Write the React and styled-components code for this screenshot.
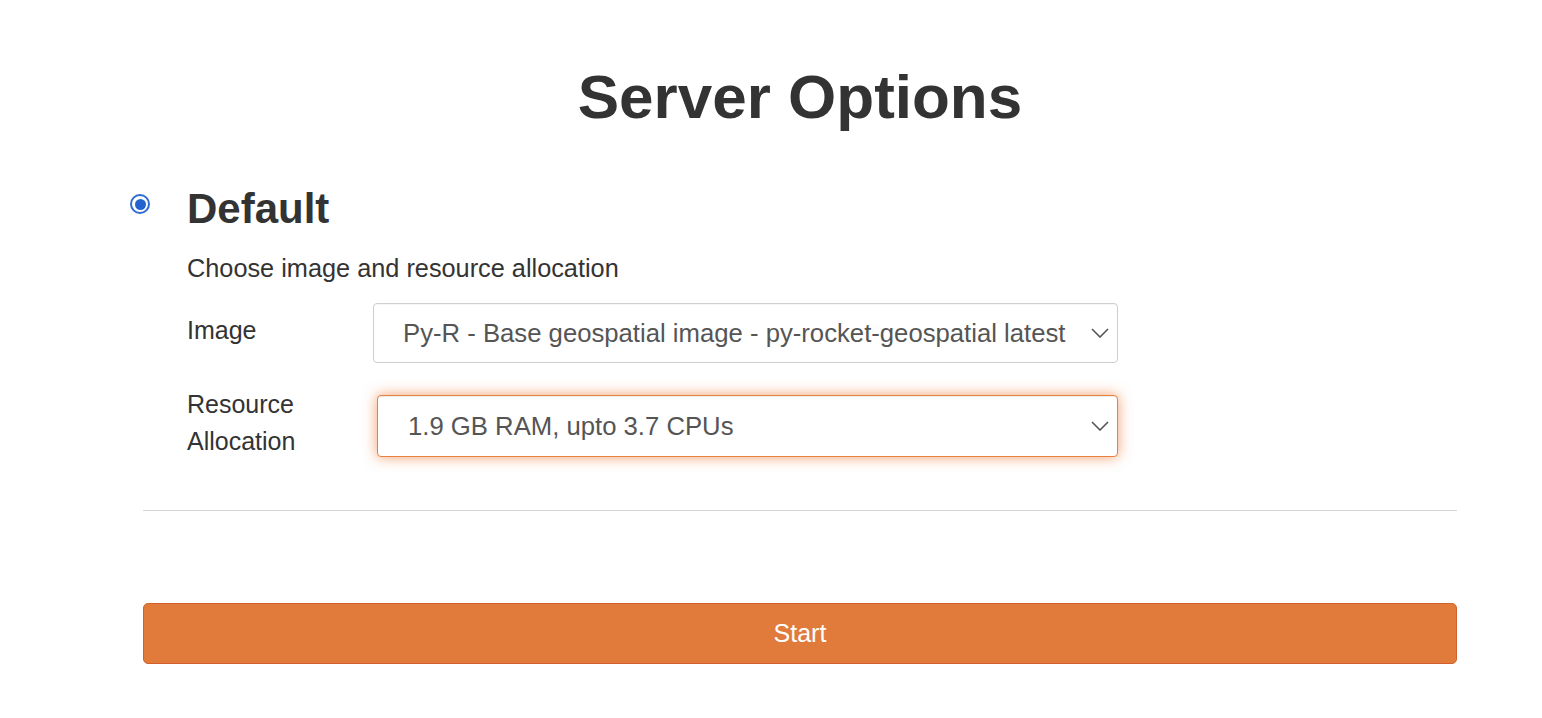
import React from "react";
import styled, { createGlobalStyle } from "styled-components";

const Global = createGlobalStyle`
  html, body { margin: 0; padding: 0; background: #fff; }
  body { font-family: "Liberation Sans", Arial, sans-serif; color: #333; }
`;

const Page = styled.div`
  width: 1314px;
  margin-left: 143px;
  padding-top: 62px;
`;

const Title = styled.h1`
  margin: 0;
  text-align: center;
  font-size: 62px;
  line-height: 70px;
  font-weight: 700;
  color: #333;
`;

const Option = styled.div`
  display: grid;
  grid-template-columns: 44px 1fr;
  margin-top: 54px;
`;

const RadioCell = styled.div`
  padding-top: 8px;
  display: flex;
  justify-content: flex-start;
  margin-left: -13px;
`;

const Radio = styled.span`
  width: 20px;
  height: 20px;
  border-radius: 50%;
  border: 2px solid #2e6bd3;
  box-sizing: border-box;
  display: flex;
  align-items: center;
  justify-content: center;
  &::after {
    content: "";
    width: 11px;
    height: 11px;
    border-radius: 50%;
    background: #2463cf;
  }
`;

const OptionBody = styled.div``;

const OptionTitle = styled.h3`
  margin: 0;
  font-size: 42px;
  line-height: 46px;
  font-weight: 700;
  color: #333;
`;

const Desc = styled.p`
  margin: 18px 0 0;
  font-size: 25.3px;
  line-height: 36px;
`;

const Row = styled.div`
  display: grid;
  grid-template-columns: 186px 745px;
  align-items: ${(p) => (p.$top ? "start" : "center")};
  margin-top: ${(p) => p.$mt}px;
`;

const Label = styled.label`
  font-size: 25px;
  line-height: 37px;
  color: #333;
  margin-bottom: ${(p) => (p.$lift ? 6 : 0)}px;
`;

const SelectBox = styled.div`
  position: relative;
  box-sizing: border-box;
  height: ${(p) => p.$h}px;
  margin-left: ${(p) => p.$indent || 0}px;
  margin-top: ${(p) => p.$mt || 0}px;
  border: 1px solid ${(p) => (p.$focus ? "#e8813d" : "#cfcfcf")};
  border-radius: 4px;
  background: #fff;
  box-shadow: ${(p) =>
    p.$focus
      ? "inset 0 1px 1px rgba(0,0,0,.075), 0 0 14px rgba(238,118,45,0.7)"
      : "inset 0 1px 1px rgba(0,0,0,.04)"};
  display: flex;
  align-items: center;
  padding-left: ${(p) => p.$pad}px;
  font-size: 25.7px;
  color: #555;
  white-space: nowrap;
`;

const Chevron = styled.svg`
  position: absolute;
  right: 8px;
  top: 50%;
  margin-top: -5px;
`;

const Divider = styled.hr`
  margin: 50px 0 0;
  border: 0;
  border-top: 1px solid #d4d4d4;
`;

const StartButton = styled.button`
  display: block;
  width: 100%;
  height: 61px;
  margin-top: 92px;
  background: #e17b3b;
  border: 1px solid #d2602c;
  border-radius: 5px;
  color: #fff;
  font-family: "Liberation Sans", Arial, sans-serif;
  font-size: 25px;
`;

const ChevronIcon = () => (
  <Chevron width="18" height="10" viewBox="0 0 18 10">
    <path d="M1 1 L9 9 L17 1" fill="none" stroke="#555" strokeWidth="1.6" />
  </Chevron>
);

export default function App() {
  return (
    <>
      <Global />
      <Page>
        <Title>Server Options</Title>
        <Option>
          <RadioCell>
            <Radio />
          </RadioCell>
          <OptionBody>
            <OptionTitle>Default</OptionTitle>
            <Desc>Choose image and resource allocation</Desc>
            <Row $mt={17}>
              <Label $lift>Image</Label>
              <SelectBox $h={60} $pad={29}>
                Py-R - Base geospatial image - py-rocket-geospatial latest
                <ChevronIcon />
              </SelectBox>
            </Row>
            <Row $mt={23} $top>
              <Label>
                Resource
                <br />
                Allocation
              </Label>
              <SelectBox $h={62} $pad={30} $indent={4} $mt={9} $focus>
                1.9 GB RAM, upto 3.7 CPUs
                <ChevronIcon />
              </SelectBox>
            </Row>
          </OptionBody>
        </Option>
        <Divider />
        <StartButton>Start</StartButton>
      </Page>
    </>
  );
}
